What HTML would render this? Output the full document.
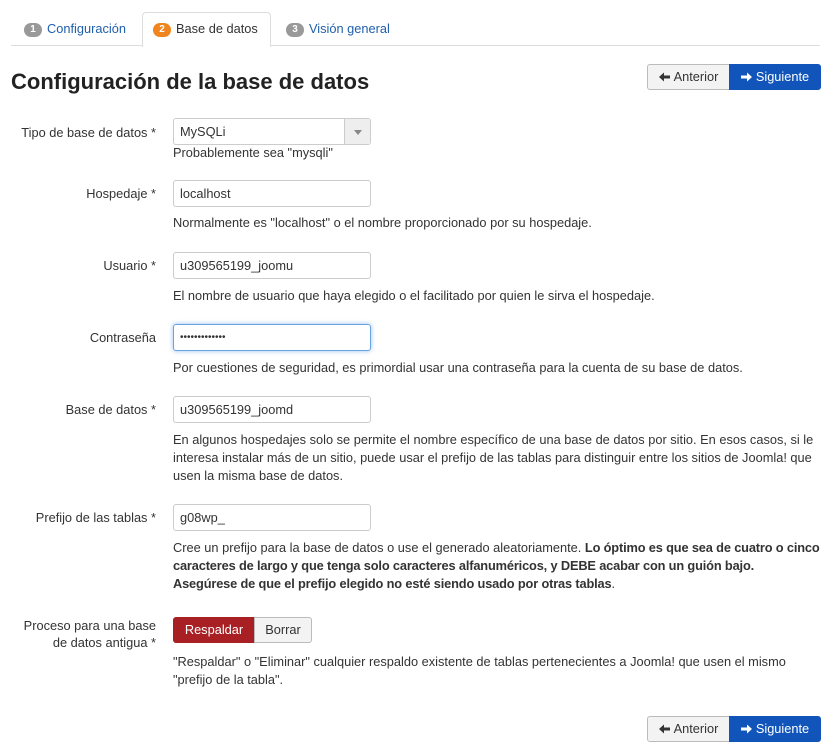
<!DOCTYPE html>
<html><head><meta charset="utf-8"><style>
body{margin:0;width:830px;height:753px;background:#fff;font-family:"Liberation Sans",sans-serif;font-size:12.8px;color:#333;position:relative;overflow:hidden}
.a{position:absolute;white-space:nowrap}
.lbl{position:absolute;right:674px;text-align:right;line-height:17px;white-space:nowrap}
.inp{position:absolute;left:173px;border:1px solid #ccc;border-radius:3px;box-sizing:border-box;width:198px;height:27px;padding-left:6px;line-height:25px;color:#333}
.help{position:absolute;left:173px;line-height:18px;width:655px}
.help b{letter-spacing:-0.15px}
.badge{display:inline-block;background:#999;color:#fff;border-radius:8px;font-size:10px;font-weight:bold;padding:0 5px;line-height:14px;margin-right:5px;vertical-align:1px;width:8px;text-align:center}
.link{color:#1f5fac}
.btn{position:absolute;height:26px;box-sizing:border-box;line-height:24px;text-align:center;white-space:nowrap}
.btn.f{line-height:26px}
.btn svg{vertical-align:-1px;margin-right:4px}
</style></head><body>
<div class="a" style="left:11px;top:45px;width:809px;height:1px;background:#ddd"></div>
<div class="a" style="left:142px;top:12px;width:127px;height:34px;border:1px solid #ddd;border-bottom:none;border-radius:4px 4px 0 0;background:#fff"></div>
<div class="a" style="left:24px;top:21px"><span class="badge">1</span><span class="link">Configuración</span></div>
<div class="a" style="left:153px;top:21px"><span class="badge" style="background:#f0851f">2</span>Base de datos</div>
<div class="a" style="left:286px;top:21px"><span class="badge">3</span><span class="link">Visión general</span></div>
<div class="a" style="left:11px;top:69px;font-size:22px;font-weight:bold;color:#222">Configuración de la base de datos</div>

<div class="btn" style="left:647px;top:64px;width:83px;border:1px solid #bbb;border-radius:3px 0 0 3px;background:#f3f3f3;color:#333"><svg width="11" height="10" viewBox="0 0 11 10"><path d="M0 5L5 0.5V3.5H11V6.5H5V9.5Z" fill="#333"/></svg>Anterior</div>
<div class="btn f" style="left:729px;top:64px;width:92px;background:#1155bb;border-radius:0 3px 3px 0;color:#fff"><svg width="11" height="10" viewBox="0 0 11 10"><path d="M11 5L6 0.5V3.5H0V6.5H6V9.5Z" fill="#fff"/></svg>Siguiente</div>

<div class="lbl" style="top:124px">Tipo de base de datos *</div>
<div class="inp" style="top:118px;background:#fff">MySQLi</div>
<div class="a" style="left:344px;top:119px;width:25px;height:25px;background:#eee;border-left:1px solid #ccc;border-radius:0 3px 3px 0"><div style="position:absolute;left:9px;top:11px;border:4px solid transparent;border-top:5px solid #888;border-bottom:none"></div></div>
<div class="help" style="top:144px">Probablemente sea "mysqli"</div>

<div class="lbl" style="top:185px">Hospedaje *</div>
<div class="inp" style="top:180px">localhost</div>
<div class="help" style="top:214px">Normalmente es "localhost" o el nombre proporcionado por su hospedaje.</div>

<div class="lbl" style="top:257px">Usuario *</div>
<div class="inp" style="top:252px">u309565199_joomu</div>
<div class="help" style="top:287px">El nombre de usuario que haya elegido o el facilitado por quien le sirva el hospedaje.</div>

<div class="lbl" style="top:329px">Contraseña</div>
<div class="inp" style="top:324px;border-color:#66a3e0;box-shadow:0 0 5px rgba(80,150,230,.6);font-size:10px">•••••••••••••</div>
<div class="help" style="top:359px">Por cuestiones de seguridad, es primordial usar una contraseña para la cuenta de su base de datos.</div>

<div class="lbl" style="top:401px">Base de datos *</div>
<div class="inp" style="top:396px">u309565199_joomd</div>
<div class="help" style="top:431px">En algunos hospedajes solo se permite el nombre específico de una base de datos por sitio. En esos casos, si le<br>interesa instalar más de un sitio, puede usar el prefijo de las tablas para distinguir entre los sitios de Joomla! que<br>usen la misma base de datos.</div>

<div class="lbl" style="top:509px">Prefijo de las tablas *</div>
<div class="inp" style="top:504px">g08wp_</div>
<div class="help" style="top:539px">Cree un prefijo para la base de datos o use el generado aleatoriamente. <b>Lo óptimo es que sea de cuatro o cinco</b><br><b>caracteres de largo y que tenga solo caracteres alfanuméricos, y DEBE acabar con un guión bajo.</b><br><b>Asegúrese de que el prefijo elegido no esté siendo usado por otras tablas</b>.</div>

<div class="lbl" style="top:617px">Proceso para una base<br>de datos antigua *</div>
<div class="btn f" style="left:173px;top:617px;width:82px;background:#a81f24;color:#fff;border-radius:3px 0 0 3px">Respaldar</div>
<div class="btn" style="left:254px;top:617px;width:58px;background:#f3f3f3;border:1px solid #bbb;border-radius:0 3px 3px 0">Borrar</div>
<div class="help" style="top:653px">"Respaldar" o "Eliminar" cualquier respaldo existente de tablas pertenecientes a Joomla! que usen el mismo<br>"prefijo de la tabla".</div>

<div class="btn" style="left:647px;top:716px;width:83px;border:1px solid #bbb;border-radius:3px 0 0 3px;background:#f3f3f3;color:#333"><svg width="11" height="10" viewBox="0 0 11 10"><path d="M0 5L5 0.5V3.5H11V6.5H5V9.5Z" fill="#333"/></svg>Anterior</div>
<div class="btn f" style="left:729px;top:716px;width:92px;background:#1155bb;border-radius:0 3px 3px 0;color:#fff"><svg width="11" height="10" viewBox="0 0 11 10"><path d="M11 5L6 0.5V3.5H0V6.5H6V9.5Z" fill="#fff"/></svg>Siguiente</div>
</body></html>
